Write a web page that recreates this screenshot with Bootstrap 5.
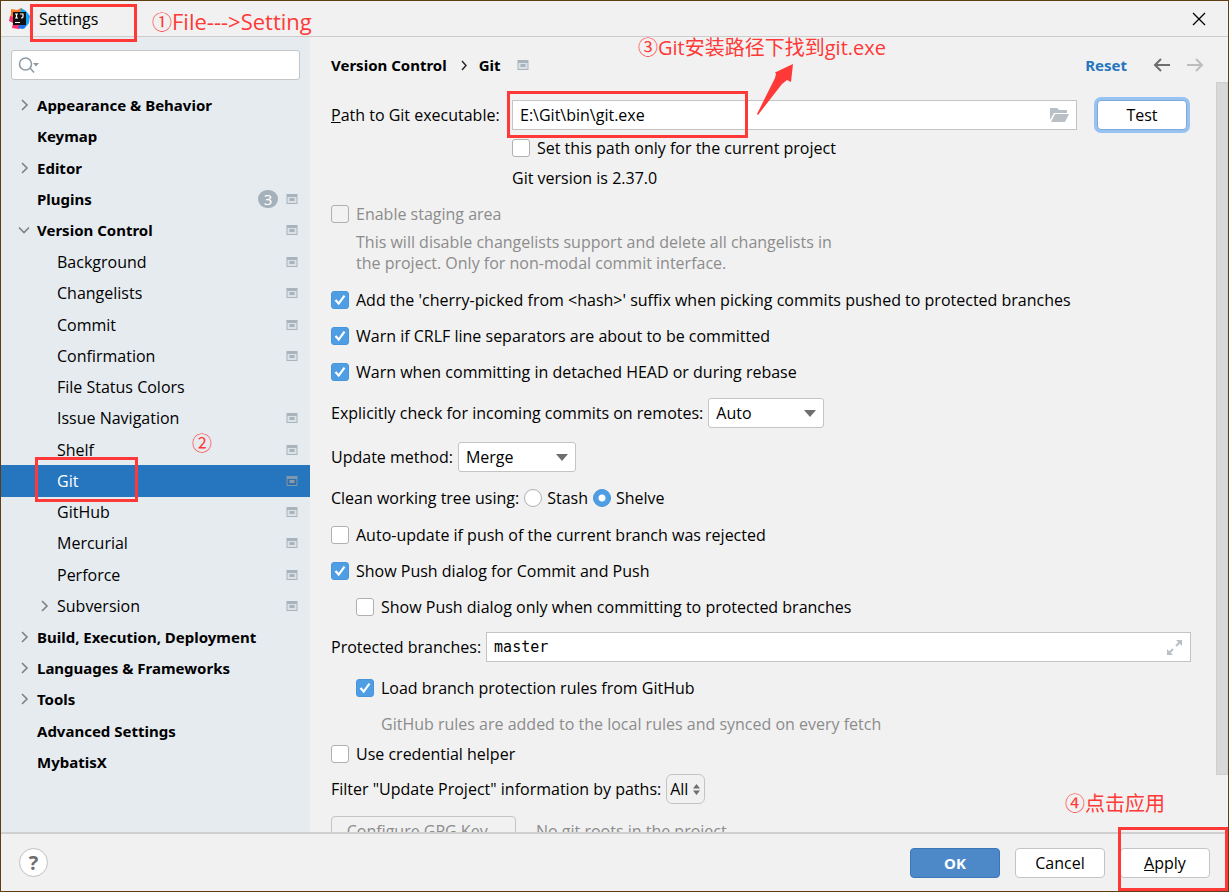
<!DOCTYPE html>
<html lang="en">
<head>
<meta charset="utf-8">
<meta name="viewport" content="width=device-width, initial-scale=1">
<title>Settings</title>
<link href="https://cdn.jsdelivr.net/npm/bootstrap@5.3.0/dist/css/bootstrap.min.css" rel="stylesheet">
<style>
:root { --ink:#000; --panel:#f1f1f1; --line:#c4c4c4; --accent:#2675bf; --note:#fe3937; }
body { background:var(--panel); color:var(--ink); font:400 16px/24px "Open Sans","Noto Sans CJK SC",sans-serif; }
.window { min-height:100vh; height:100vh; border:1px solid #5f3f12; overflow:hidden; }
.titlebar { height:36px; border-bottom:1px solid #cdcdcd; padding:0 22px 0 8px; gap:9px; flex:none; }
.plain { border:0; background:none; padding:0; line-height:0; color:inherit; }
.side { width:309px; background:#e6ebf0; padding-top:13px; flex:none; }
.search { margin:0 10px; height:30px; border:1px solid var(--line); border-radius:3px; background:#fff; padding:0 6px; }
.search input { border:0; outline:0; background:none; flex:1; min-width:0; }
.tree { display:grid; grid-auto-rows:1fr; flex:1; margin:10px 0 54px; padding:0; list-style:none; }
.tree li { display:flex; align-items:center; padding:0 12px 0 16px; position:relative; }
.tree a { color:inherit; text-decoration:none; flex:1; white-space:nowrap; }
.tree .arrow { width:14px; height:14px; margin-right:6px; flex:none; }
.strong, .tree .top { font:700 15px/24px "Noto Sans",sans-serif; }
.tree .top { padding-bottom:1px; }
.tree .sub { padding-left:36px; }
.tree .picked { background:var(--accent); color:#fff; }
.count { width:20px; height:18px; border-radius:9px; background:#a5b1ba; color:#fff; font-weight:400; line-height:18px; text-align:center; margin-right:8px; }
.crumbs { height:45px; padding:10px 24px 0 21px; flex:none; }
.crumbs a { text-decoration:none; color:var(--accent); }
.back { margin-left:26px; } .fwd { margin-left:17px; }
.sheet { padding:18px 25px 0 21px; min-width:0; flex:1; }
.thumb { width:12px; margin-bottom:57px; background:#d8d8d8; border:1px solid #cfcfcf; flex:none; }
.rowline { display:flex; align-items:center; min-height:24px; white-space:nowrap; flex:none; }
.tall { min-height:30px; }
.g6 { margin-top:6px; } .g8 { margin-top:8px; } .g12 { margin-top:12px; } .g13 { margin-top:13px; } .g14 { margin-top:14px; }
.in1 { padding-left:25px; }
.lab { margin-right:5px; }
.pathcol { width:181px; flex:none; }
.after-path { padding-left:181px; }
.dim { color:#8c8c8c; }
.hint { line-height:21px; }
.rowline .form-check-input, .rowline .form-check-input:disabled { width:18px; height:18px; margin:0 7px 0 0; border:1px solid #b0b0b0; background-color:#fff; flex:none; opacity:1; }
.rowline .form-check-input[type=checkbox] { border-radius:3px; }
.rowline .form-check-input:disabled { background-color:#f2f2f2; }
.rowline .form-check-input:checked { background-color:#4f9ee3; border-color:#4796dc; }
.rowline .form-check-input[type=checkbox]:checked { background-image:url("data:image/svg+xml,%3Csvg xmlns='http://www.w3.org/2000/svg' viewBox='0 0 16 16'%3E%3Cpath d='M3.5 8l3.2 3.6 5.8-8' fill='none' stroke='%23fff' stroke-width='2.2'/%3E%3C/svg%3E"); background-size:16px; }
.rowline .form-check-input[type=radio]:checked { background-image:radial-gradient(circle,#fff 3px,transparent 4px); }
.rowline .form-check-input[type=radio] { margin-right:5px; }
.rowline .form-check-input:disabled ~ label { opacity:1; color:#8c8c8c; }
.field { display:flex; align-items:center; height:30px; border:1px solid var(--line); background:#fff; padding:0 7px; flex:1; min-width:0; }
.field input { border:0; outline:0; padding:0; background:none; flex:1; min-width:0; color:#000; }
.field .mono { font:15px/24px "DejaVu Sans Mono",monospace; }
.rowline .form-select { height:30px; padding:0 28px 0 7px; font:inherit; line-height:28px; color:#000; border:1px solid var(--line); border-radius:3px; background-color:#fff; background-image:url("data:image/svg+xml,%3Csvg xmlns='http://www.w3.org/2000/svg' viewBox='0 0 12 7'%3E%3Cpath d='M0 0h12L6 7z' fill='%236e6e6e'/%3E%3C/svg%3E"); background-size:12px 7px; background-position:right 7px center; }
.sel-auto { width:116px; } .sel-merge { width:118px; }
.rowline .sel-all { width:39px; padding:0 3px; border-radius:6px; background-color:transparent; background-image:url("data:image/svg+xml,%3Csvg xmlns='http://www.w3.org/2000/svg' viewBox='0 0 7 11'%3E%3Cpath d='M0 4.500L3.500 0 7 4.500zM0 6.500h7L3.500 11z' fill='%236e6e6e'/%3E%3C/svg%3E"); background-size:7px 11px; background-position:right 4px center; }
.dlg { height:30px; width:90px; padding:0; font:inherit; line-height:28px; color:#000; background:#fff; border:1px solid var(--line); border-radius:4px; flex:none; }
.dlg.primary { background:#4d89c9; border-color:#3c75b8; color:#fff; font:700 15px/28px "Noto Sans",sans-serif; }
.dlg.ring { border-color:#7fa9d8; box-shadow:0 0 0 3px #97c3f3; margin:0 4px 0 20px; }
.dlg.gpg { width:185px; color:#8c8c8c; background:none; margin-right:20px; }
.bottom { height:59px; border-top:2px solid #cfcfcf; padding:0 18px; flex:none; gap:15px; }
.help { width:29px; height:29px; border:1px solid #c0c0c0; border-radius:50%; background:#fff; color:#6e6e6e; font-weight:700; font-size:20px; line-height:26px; padding:0; }
/* Tutorial markings laid over the dialog */
.note { position:absolute; color:var(--note); font-size:20px; line-height:24px; font-weight:400; white-space:nowrap; pointer-events:none; z-index:3; }
.note b { font-weight:400; font-size:22px; }
.frame { position:absolute; border:3px solid var(--note); pointer-events:none; z-index:3; }
.f1 { left:29px; top:3px; width:107px; height:38px; } .n1 { left:151px; top:8px; }
.f2 { left:34px; top:-8px; width:103px; height:45px; } .n2 { left:191px; top:-33px; }
.f3 { left:176px; top:-9px; width:241px; height:47px; } .n3 { left:637px; top:35px; }
.n3 b { font-size:20px; }
.pointer { position:absolute; left:754px; top:63px; z-index:3; }
.f4 { right:-18px; bottom:-13px; width:110px; height:64px; } .n4 { right:63px; bottom:75px; }
</style>
</head>
<body>
<svg class="d-none">
  <symbol id="proj" viewBox="0 0 11 10"><path d="M0 0h11v10H0z" fill="#a8b3bb"/><path d="M1 3h9v6H1z" fill="#dbe2e7"/><path d="M3 4h5v3H3z" fill="#a8b3bb"/></symbol>
  <symbol id="right" viewBox="0 0 14 14"><path d="M5 2l5 5-5 5" fill="none" stroke="#808080" stroke-width="1.600"/></symbol>
  <symbol id="down" viewBox="0 0 14 14"><path d="M2 4.500l5 5 5-5" fill="none" stroke="#808080" stroke-width="1.600"/></symbol>
</svg>
<div class="window d-flex flex-column position-relative">
  <header class="titlebar d-flex align-items-center">
    <svg width="21" height="21" viewBox="0 0 21 21"><path d="M2 1l6 1 4-2 3 4-4 8-10-2 1-5z" fill="#fd7a2b"/><path d="M12 0l5 3 4 5-1 7-5 6-5-4z" fill="#12a5f5"/><path d="M1 8l6 2 6 9-3 2-7-1 1-5-4-2z" fill="#fb2f6d"/><path d="M11 16l6 1-3 4-5-1z" fill="#1c6fe8"/><path d="M4 4h13v13H4z" fill="#111"/><path d="M6 6h3M7.500 6v4M6 10h3M11 6h3v3q0 1-2 1M6 14.500h5" fill="none" stroke="#fff" stroke-width="1.200"/></svg>
    <span>Settings</span>
    <button class="plain ms-auto" aria-label="Close"><svg width="14" height="14" viewBox="0 0 14 14"><path d="M1 1l12 12M13 1L1 13" stroke="#000" stroke-width="1.300"/></svg></button>
  </header>
  <div class="frame f1"></div><div class="note n1">①<b>File---&gt;Setting</b></div>
  <div class="note n3">③<b>Git</b>安装路径下找到<b>git.exe</b></div>
  <svg class="pointer" width="40" height="52" viewBox="0 0 40 52"><path d="M38 0l-2 18-4-2-5 4L3 51l-1-1L20 14l1-4-1-1.500z" fill="#fe3937"/></svg>

  <div class="d-flex flex-grow-1 overflow-hidden">
    <nav class="side d-flex flex-column">
      <label class="search d-flex align-items-center"><svg width="22" height="18" viewBox="0 0 22 18" fill="none" stroke="#8f9ba3" stroke-width="1.600"><circle cx="7.500" cy="8" r="6"/><path d="M12 12l4 4.500"/><path d="M15 7h6l-3 3.500z" fill="#8f9ba3" stroke="none"/></svg><input type="text" aria-label="Search settings"></label>
      <ul class="tree">
        <li class="top"><svg class="arrow"><use href="#right"/></svg><a href="#">Appearance &amp; Behavior</a></li>
        <li class="top"><span class="arrow"></span><a href="#">Keymap</a></li>
        <li class="top"><svg class="arrow"><use href="#right"/></svg><a href="#">Editor</a></li>
        <li class="top"><span class="arrow"></span><a href="#">Plugins</a><span class="count">3</span><svg width="12" height="10"><use href="#proj"/></svg></li>
        <li class="top"><svg class="arrow"><use href="#down"/></svg><a href="#">Version Control</a><svg width="12" height="10"><use href="#proj"/></svg></li>
        <li class="sub"><span class="arrow"></span><a href="#">Background</a><svg width="12" height="10"><use href="#proj"/></svg></li>
        <li class="sub"><span class="arrow"></span><a href="#">Changelists</a><svg width="12" height="10"><use href="#proj"/></svg></li>
        <li class="sub"><span class="arrow"></span><a href="#">Commit</a><svg width="12" height="10"><use href="#proj"/></svg></li>
        <li class="sub"><span class="arrow"></span><a href="#">Confirmation</a><svg width="12" height="10"><use href="#proj"/></svg></li>
        <li class="sub"><span class="arrow"></span><a href="#">File Status Colors</a></li>
        <li class="sub"><span class="arrow"></span><a href="#">Issue Navigation</a><svg width="12" height="10"><use href="#proj"/></svg></li>
        <li class="sub"><span class="arrow"></span><a href="#">Shelf</a><svg width="12" height="10"><use href="#proj"/></svg></li>
        <li class="sub picked"><span class="arrow"></span><a href="#" aria-current="page">Git</a><svg width="12" height="10" viewBox="0 0 11 10"><path d="M0 0h11v10H0z" fill="#7f97ad"/><path d="M1 3h9v6H1z" fill="#2e70ae"/><path d="M3 4h5v3H3z" fill="#8b9ba8"/></svg><span class="frame f2"></span><span class="note n2">②</span></li>
        <li class="sub"><span class="arrow"></span><a href="#">GitHub</a><svg width="12" height="10"><use href="#proj"/></svg></li>
        <li class="sub"><span class="arrow"></span><a href="#">Mercurial</a><svg width="12" height="10"><use href="#proj"/></svg></li>
        <li class="sub"><span class="arrow"></span><a href="#">Perforce</a><svg width="12" height="10"><use href="#proj"/></svg></li>
        <li class="sub"><svg class="arrow"><use href="#right"/></svg><a href="#">Subversion</a><svg width="12" height="10"><use href="#proj"/></svg></li>
        <li class="top"><svg class="arrow"><use href="#right"/></svg><a href="#">Build, Execution, Deployment</a></li>
        <li class="top"><svg class="arrow"><use href="#right"/></svg><a href="#">Languages &amp; Frameworks</a></li>
        <li class="top"><svg class="arrow"><use href="#right"/></svg><a href="#">Tools</a></li>
        <li class="top"><span class="arrow"></span><a href="#">Advanced Settings</a></li>
        <li class="top"><span class="arrow"></span><a href="#">MybatisX</a></li>
      </ul>
    </nav>

    <main class="d-flex flex-column flex-grow-1 overflow-hidden">
      <div class="crumbs strong d-flex align-items-center">
        <span>Version Control</span>
        <svg class="mx-2" width="16" height="14" viewBox="0 0 16 14"><path d="M7 3l4 4.500-4 4.500" fill="none" stroke="#222" stroke-width="1.400"/></svg>
        <span>Git</span>
        <svg class="ms-3" width="12" height="10"><use href="#proj"/></svg>
        <a class="ms-auto" href="#">Reset</a>
        <button class="plain back" aria-label="Back"><svg width="17" height="14" viewBox="0 0 17 14"><path d="M17 7H2M8 1L2 7l6 6" fill="none" stroke="#6e6e6e" stroke-width="2"/></svg></button>
        <button class="plain fwd" aria-label="Forward"><svg width="17" height="14" viewBox="0 0 17 14"><path d="M0 7h15M9 1l6 6-6 6" fill="none" stroke="#bdbdbd" stroke-width="2"/></svg></button>
      </div>
      <div class="d-flex flex-grow-1 overflow-hidden">
        <form class="sheet d-flex flex-column">
          <div class="rowline tall position-relative">
            <label class="pathcol" for="path"><u>P</u>ath to Git executable:</label>
            <div class="field"><input id="path" type="text" value="E:\Git\bin\git.exe"><button type="button" class="plain" aria-label="Browse"><svg width="19" height="15" viewBox="0 0 19 15"><path d="M0 0h7l2 2h8v3H4L0 12z" fill="#b9c0c5"/><path d="M5 6h14l-4 8H1z" fill="#b9c0c5"/></svg></button></div>
            <button type="button" class="dlg ring">Test</button>
            <div class="frame f3"></div>
          </div>
          <div class="rowline g6 after-path"><input class="form-check-input" type="checkbox" id="c1"><label for="c1">Set this path only for the current project</label></div>
          <div class="rowline g6 after-path"><span>Git version is 2.37.0</span></div>
          <div class="rowline g12"><input class="form-check-input" type="checkbox" id="c2" disabled><label for="c2">Enable staging area</label></div>
          <div class="g6 in1 dim hint">This will disable changelists support and delete all changelists in<br>the project. Only for non-modal commit interface.</div>
          <div class="rowline g14"><input class="form-check-input" type="checkbox" id="c3" checked><label for="c3">Add the 'cherry-picked from &lt;hash&gt;' suffix when picking commits pushed to protected branches</label></div>
          <div class="rowline g12"><input class="form-check-input" type="checkbox" id="c4" checked><label for="c4">Warn if CRLF line separators are about to be committed</label></div>
          <div class="rowline g12"><input class="form-check-input" type="checkbox" id="c5" checked><label for="c5">Warn when committing in detached HEAD or during rebase</label></div>
          <div class="rowline tall g14"><label for="s1" class="lab">Explicitly check for incoming commits on remotes:</label><select id="s1" class="form-select sel-auto"><option>Auto</option></select></div>
          <div class="rowline tall g14"><label for="s2" class="lab">Update method:</label><select id="s2" class="form-select sel-merge"><option>Merge</option></select></div>
          <div class="rowline g14"><span class="lab">Clean working tree using:</span><input class="form-check-input" type="radio" name="clean" id="r1"><label for="r1" class="lab">Stash</label><input class="form-check-input" type="radio" name="clean" id="r2" checked><label for="r2">Shelve</label></div>
          <div class="rowline g13"><input class="form-check-input" type="checkbox" id="c6"><label for="c6">Auto-update if push of the current branch was rejected</label></div>
          <div class="rowline g12"><input class="form-check-input" type="checkbox" id="c7" checked><label for="c7">Show Push dialog for Commit and Push</label></div>
          <div class="rowline g12 in1"><input class="form-check-input" type="checkbox" id="c8"><label for="c8">Show Push dialog only when committing to protected branches</label></div>
          <div class="rowline tall g13"><label for="prot" class="lab">Protected branches:</label><div class="field"><input id="prot" class="mono" type="text" value="master"><button type="button" class="plain" aria-label="Expand"><svg width="17" height="17" viewBox="0 0 17 17"><path d="M10 1h6v6zM1 10v6h6z" fill="#b9c0c5"/><path d="M15 2l-5 5M2 15l5-5" stroke="#b9c0c5" stroke-width="2"/></svg></button></div></div>
          <div class="rowline g14 in1"><input class="form-check-input" type="checkbox" id="c9" checked><label for="c9">Load branch protection rules from GitHub</label></div>
          <div class="rowline g12 in1 dim"><span class="in1">GitHub rules are added to the local rules and synced on every fetch</span></div>
          <div class="rowline g6"><input class="form-check-input" type="checkbox" id="c10"><label for="c10">Use credential helper</label></div>
          <div class="rowline tall g8"><label for="s3" class="lab">Filter "Update Project" information by paths:</label><select id="s3" class="form-select sel-all"><option>All</option></select></div>
          <div class="rowline tall g12 dim"><button type="button" class="dlg gpg" disabled>Configure GPG Key...</button><span>No git roots in the project</span></div>
        </form>
        <div class="thumb"></div>
      </div>
    </main>
  </div>

  <div class="note n4">④点击应用</div>
  <footer class="bottom d-flex align-items-center">
    <button class="help me-auto" aria-label="Help">?</button>
    <button class="dlg primary">OK</button>
    <button class="dlg">Cancel</button>
    <div class="position-relative d-flex"><button class="dlg"><u>A</u>pply</button><div class="frame f4"></div></div>
  </footer>
</div>
<script src="https://cdn.jsdelivr.net/npm/bootstrap@5.3.0/dist/js/bootstrap.bundle.min.js"></script>
</body>
</html>
